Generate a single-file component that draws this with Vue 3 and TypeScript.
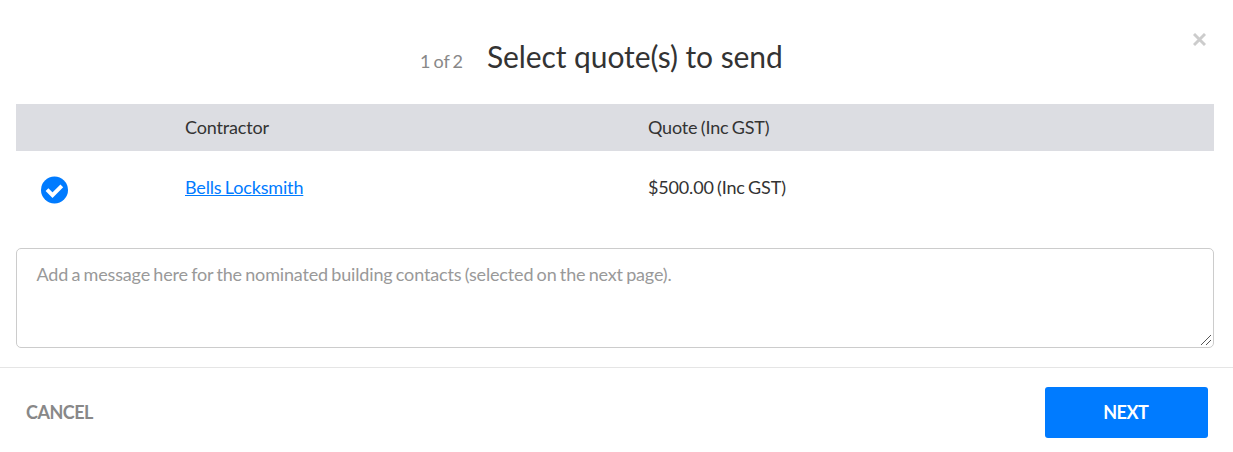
<script setup lang="ts">
import { ref } from 'vue'

interface Quote { contractor: string; amount: string }
const quotes: Quote[] = [{ contractor: 'Bells Locksmith', amount: '$500.00 (Inc GST)' }]
const message = ref('')
</script>

<template>
  <main class="dialog">
    <header class="header">
      <span class="step">1 of 2</span>
      <h1 class="title">Select quote(s) to send</h1>
      <button class="close" aria-label="Close">
        <svg width="13" height="13" viewBox="0 0 13 13"><path d="M1 1 12 12M12 1 1 12" fill="none" stroke="#ccc" stroke-width="2.9" /></svg>
      </button>
    </header>
    <section class="body">
      <div class="row head"><span></span><span>Contractor</span><span>Quote (Inc GST)</span></div>
      <div v-for="q in quotes" :key="q.contractor" class="row item">
        <span class="check">
          <svg width="27" height="28" viewBox="0 0 27 28"><circle cx="13.5" cy="14" r="13.5" fill="#007bff" /><path d="M6 13.7 11.5 19.2 20.8 9.9" fill="none" stroke="#fff" stroke-width="3.9" /></svg>
        </span>
        <a>{{ q.contractor }}</a>
        <span>{{ q.amount }}</span>
      </div>
      <div class="field">
        <textarea v-model="message" class="message" placeholder="Add a message here for the nominated building contacts (selected on the next page)."></textarea>
        <svg class="grip" width="10" height="10" viewBox="0 0 10 10" shape-rendering="crispEdges"><path d="M0 10 10 0M5 10 10 5" fill="none" stroke="#555" stroke-width="1" /></svg>
      </div>
    </section>
    <footer class="footer">
      <button class="cancel">CANCEL</button>
      <button class="next">NEXT</button>
    </footer>
  </main>
</template>

<style>
body { margin: 0; background: #fff; }
</style>
<style scoped>
.dialog { width: 1233px; height: 452px; overflow: hidden; box-sizing: border-box; font: 18px/27px Lato, sans-serif; letter-spacing: -0.16px; word-spacing: -1.15px; color: #333; display: flex; flex-direction: column; }
.header { height: 104px; flex: none; box-sizing: border-box; padding: 35px 27px 0 420px; display: flex; align-items: baseline; }
.step { color: #888; width: 67px; }
.title { margin: 0; font-size: 30px; line-height: 42px; font-weight: 400; flex: 1; letter-spacing: -0.09px; word-spacing: 0; }
button { font: inherit; border: 0; background: none; padding: 0; }
.close { align-self: flex-start; margin-top: -2px; line-height: 0; }
.body { padding: 0 19px 0 16px; height: 263px; flex: none; }
.row { display: grid; grid-template-columns: 169px 463px 1fr; }
.head { background: #dcdde2; height: 47px; line-height: 47px; }
.item { height: 97px; padding-top: 23px; box-sizing: border-box; }
.item a { color: #007bff; text-decoration: underline; }
.check { padding: 2px 0 0 25px; line-height: 0; }
.field { position: relative; }
.message { display: block; box-sizing: border-box; width: 100%; height: 100px; border: 1px solid #ccc; border-radius: 5px; padding: 12px 19px 12px 19.5px; font: inherit; letter-spacing: inherit; word-spacing: inherit; outline: 0; color: #333; resize: none; }
.message::placeholder { color: #999; opacity: 1; }
.grip { position: absolute; right: 3px; bottom: 3px; pointer-events: none; }
.footer { flex: 1; border-top: 1px solid #e5e5e5; display: flex; justify-content: space-between; align-items: flex-start; padding: 19px 25px 0 26px; font-weight: 700; }
.cancel { color: #888; height: 51px; letter-spacing: -0.5px; }
.next { width: 163px; height: 51px; padding-right: 1.5px; border-radius: 3px; background: #007bff; color: #fff; letter-spacing: -0.5px; }
</style>
